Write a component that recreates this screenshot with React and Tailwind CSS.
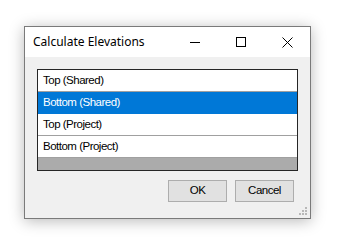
import React from 'react'

const items = [
  { label: 'Top (Shared)', selected: false },
  { label: 'Bottom (Shared)', selected: true },
  { label: 'Top (Project)', selected: false },
  { label: 'Bottom (Project)', selected: false },
]

export default function App() {
  return (
    <div className="w-[340px] h-[247px] bg-white pt-[26px] pl-[24px]">
      <div className="w-[287px] h-[193px] border border-[#7a7a7a] bg-[#f0f0f0] flex flex-col shadow-[0_2px_14px_rgba(0,0,0,0.28)]">
        {/* title bar */}
        <div className="h-[30px] bg-white flex items-center pl-[8px] font-['Noto_Sans',sans-serif] text-[12px] text-black">
          <span className="flex-1 leading-none">Calculate Elevations</span>
          <div className="flex items-center h-full">
            <div className="w-[46px] h-full flex items-center justify-center">
              <div className="w-[10px] h-px bg-black" />
            </div>
            <div className="w-[46px] h-full flex items-center justify-center">
              <div className="w-[10px] h-[10px] border border-black" />
            </div>
            <div className="w-[46px] h-full flex items-center justify-center">
              <svg width="11" height="11" viewBox="0 0 11 11">
                <path d="M0.5 0.5 L10.5 10.5 M10.5 0.5 L0.5 10.5" stroke="#000" strokeWidth="1" />
              </svg>
            </div>
          </div>
        </div>

        {/* body */}
        <div className="flex-1 flex flex-col pt-[12px] px-[12px] relative font-['Liberation_Sans',Arial,sans-serif] text-[11.5px] tracking-[-0.5px] text-black">
          <div className="w-[261px] h-[102px] border border-[#262626] bg-[#ababab] flex flex-col">
            {items.map(item => (
              <div
                key={item.label}
                className={`h-[22px] flex items-center pl-[5px] border-b ${
                  item.selected ? 'bg-[#0078d7] text-white border-[#0078d7]' : 'bg-white border-[#a0a0a0]'
                }`}
              >
                {item.label}
              </div>
            ))}
          </div>

          <div className="flex justify-end gap-[8px] mt-[9px] pr-[4px]">
            <button className="w-[59px] h-[22px] bg-[#e1e1e1] border border-[#adadad] flex items-center justify-center">
              OK
            </button>
            <button className="w-[59px] h-[22px] bg-[#e1e1e1] border border-[#adadad] flex items-center justify-center">
              Cancel
            </button>
          </div>

          {/* resize grip */}
          <svg className="absolute right-[2px] bottom-[2px]" width="10" height="10" viewBox="0 0 10 10">
            {[[7, 1], [4, 4], [7, 4], [1, 7], [4, 7], [7, 7]].map(([x, y]) => (
              <rect key={`${x}-${y}`} x={x} y={y} width="2" height="2" fill="#b8b8b8" />
            ))}
          </svg>
        </div>
      </div>
    </div>
  )
}
